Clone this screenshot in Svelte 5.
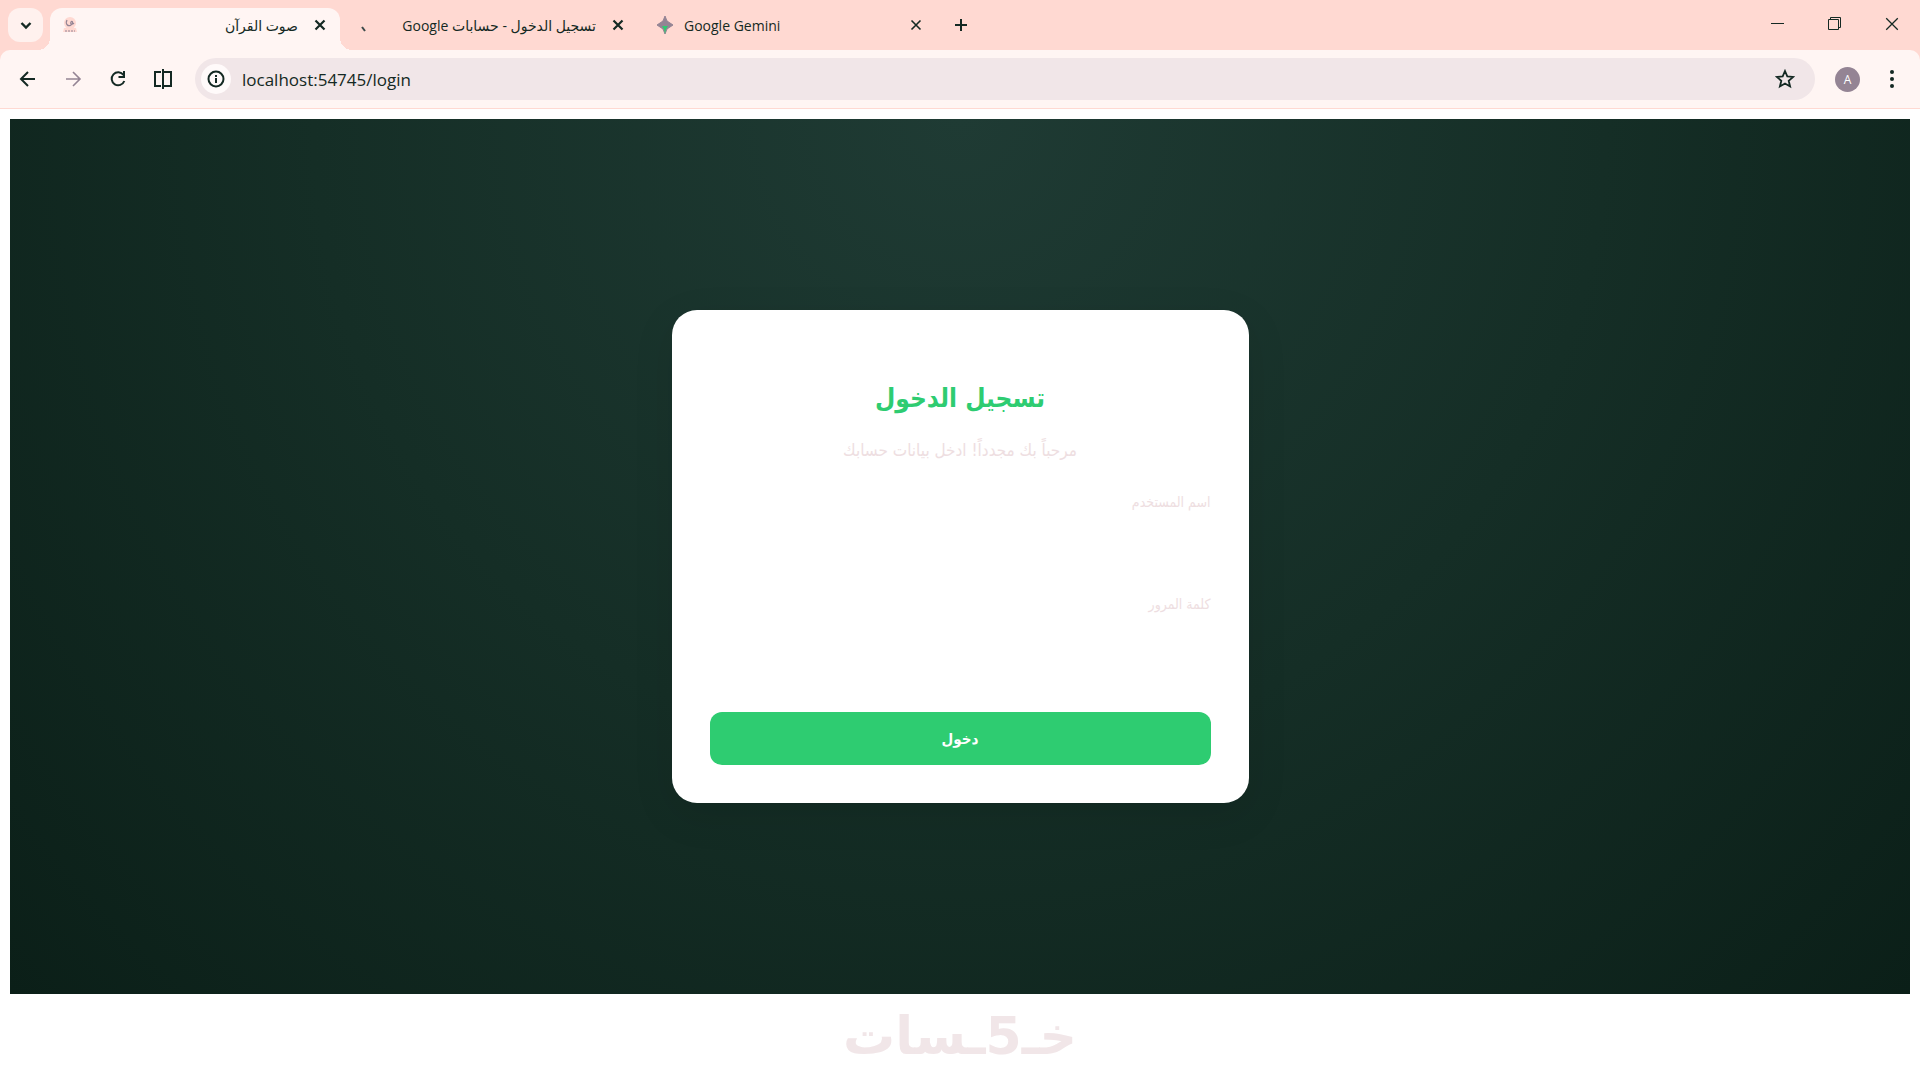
<script>
  let username = $state('');
  let password = $state('');
  let address = $state('localhost:54745/login');
</script>

{#snippet cross(size, weight)}
  <svg width={size} height={size} viewBox="0 0 14 14" fill="none" stroke="currentColor" stroke-width={weight}>
    <path d="M2.500 2.500l9 9M11.500 2.500l-9 9" />
  </svg>
{/snippet}

<div class="browser">
  <div class="chrome">
    <header class="tab-strip">
      <button type="button" class="tab-search" aria-label="Search tabs">
        <svg width="14" height="14" viewBox="0 0 14 14" fill="none" stroke="currentColor" stroke-width="2.4">
          <path d="M2.500 5L7 9.500 11.500 5" />
        </svg>
      </button>

      <div class="tab active">
        <svg class="favicon" width="16" height="16" viewBox="0 0 16 16" fill="none">
          <circle cx="8" cy="6" r="6" fill="#ffd9d2" />
          <path d="M5 3c-2 4 1 7 4 5s1-5 0-3 1 3 3 1" stroke="#948494" stroke-width="1.2" />
          <path d="M2 11h12l1 4H1z" fill="#ffd9d2" />
          <path d="M3 14h10" stroke="#948494" stroke-dasharray="2 1" />
        </svg>
        <button type="button" class="tab-title" dir="rtl">صوت القرآن</button>
        <button type="button" class="tab-close" aria-label="Close tab">{@render cross(14, 2.2)}</button>
      </div>

      <div class="tab">
        <svg class="favicon" width="16" height="16" viewBox="0 0 16 16" fill="none">
          <path d="M4 10l3 4" stroke="#3c4a4a" stroke-width="2" />
        </svg>
        <button type="button" class="tab-title" dir="rtl">تسجيل الدخول - حسابات Google</button>
        <button type="button" class="tab-close" aria-label="Close tab">{@render cross(14, 2.2)}</button>
      </div>

      <div class="tab">
        <svg class="favicon" width="18" height="18" viewBox="0 0 18 18">
          <path d="M9 0l2 5 6 4-6 4-2 5-2-5-6-4 6-4z" fill="#948494" stroke="#948494" />
          <path d="M6 10h6l-2 3-1 5-1-5z" fill="#2ecc71" />
        </svg>
        <button type="button" class="tab-title">Google Gemini</button>
        <button type="button" class="tab-close" aria-label="Close tab">{@render cross(14, 1.6)}</button>
      </div>

      <button type="button" class="new-tab" aria-label="New tab">
        <svg width="14" height="14" viewBox="0 0 14 14" stroke="currentColor" stroke-width="2">
          <path d="M7 1v12M1 7h12" />
        </svg>
      </button>

      <div class="window-controls">
        <button type="button" aria-label="Minimize">
          <svg width="14" height="14" viewBox="0 0 14 14" stroke="currentColor"><path d="M0 6.500h13" /></svg>
        </button>
        <button type="button" aria-label="Restore">
          <svg width="14" height="14" viewBox="0 0 14 14" fill="none" stroke="currentColor">
            <path d="M.5 2.500h10v10H.5zM2.500 2.500v-2h10v10h-2" />
          </svg>
        </button>
        <button type="button" aria-label="Close">{@render cross(18, 1)}</button>
      </div>
    </header>

    <nav class="toolbar">
      <button type="button" class="tool" aria-label="Back">
        <svg width="18" height="18" viewBox="0 0 18 18" fill="none" stroke="currentColor" stroke-width="2">
          <path d="M16 9H3M9 2L2 9l7 7" />
        </svg>
      </button>
      <button type="button" class="tool muted" aria-label="Forward">
        <svg width="18" height="18" viewBox="0 0 18 18" fill="none" stroke="currentColor" stroke-width="1.6">
          <path d="M2 9h13M9 2l7 7-7 7" />
        </svg>
      </button>
      <button type="button" class="tool" aria-label="Reload">
        <svg width="18" height="18" viewBox="0 0 18 18" fill="none" stroke="currentColor" stroke-width="2">
          <path d="M14.500 5A6.500 6.500 0 1 0 15.300 11M15 1v6H9.500" />
        </svg>
      </button>
      <button type="button" class="tool" aria-label="Split view">
        <svg width="20" height="20" viewBox="0 0 20 20" fill="none" stroke="currentColor" stroke-width="2">
          <path d="M8 3H2v14h6M10 0v20M10 3h8v14h-8" />
        </svg>
      </button>

      <div class="address">
        <button type="button" class="site-info" aria-label="View site information">
          <svg width="18" height="18" viewBox="0 0 18 18" fill="none" stroke="currentColor" stroke-width="2">
            <circle cx="9" cy="9" r="7.500" />
            <path d="M9 8v5M9 5v2" />
          </svg>
        </button>
        <input type="text" aria-label="Address" bind:value={address} spellcheck="false" />
        <button type="button" class="bookmark" aria-label="Bookmark this tab">
          <svg width="20" height="20" viewBox="0 0 20 20" fill="none" stroke="currentColor" stroke-width="1.800">
            <path d="M10 2l2.300 5.400 5.900.5-4.500 3.900 1.400 5.700L10 14.500l-5.100 3 1.400-5.700-4.500-3.900 5.900-.5z" />
          </svg>
        </button>
      </div>

      <button type="button" class="avatar" aria-label="Profile">A</button>
      <button type="button" class="more" aria-label="Menu">
        <svg width="4" height="18" viewBox="0 0 4 18" fill="currentColor">
          <circle cx="2" cy="2" r="2" /><circle cx="2" cy="9" r="2" /><circle cx="2" cy="16" r="2" />
        </svg>
      </button>
    </nav>
  </div>

  <main class="stage" dir="rtl">
    <form class="card" onsubmit={(e) => e.preventDefault()}>
      <h1>تسجيل الدخول</h1>
      <p>مرحباً بك مجدداً! ادخل بيانات حسابك</p>

      <div class="field">
        <label for="username">اسم المستخدم</label>
        <input id="username" type="text" bind:value={username} />
      </div>
      <div class="field">
        <label for="password">كلمة المرور</label>
        <input id="password" type="password" bind:value={password} />
      </div>

      <button type="submit" class="submit">دخول</button>
    </form>
  </main>

  <footer class="brand" dir="rtl">خـ5ـسات</footer>
</div>

<style>
  :global(body) {
    margin: 0;
    background: #fff;
  }

  .browser {
    display: flex;
    flex-direction: column;
    min-height: 100vh;
    color: #142923;
    font-family: 'Open Sans', 'DejaVu Sans', sans-serif;
  }

  button,
  input {
    padding: 0;
    border: 0;
    background: none;
    color: inherit;
    font: inherit;
  }

  button {
    display: flex;
    flex-shrink: 0;
    align-items: center;
    justify-content: center;
    cursor: pointer;
  }

  /* tabs */
  .chrome {
    background: #ffd9d2;
  }
  .tab-strip {
    display: flex;
    height: 50px;
  }
  .tab-search {
    width: 35px;
    height: 34px;
    margin: 8px 7px 0 8px;
    border-radius: 12px;
    background: #fff1ee;
  }
  .tab {
    display: flex;
    box-sizing: border-box;
    width: 290px;
    align-items: center;
    gap: 10px;
    padding: 0 12px;
    font-size: 14px;
  }
  .tab.active {
    position: relative;
    margin-top: 8px;
    padding-bottom: 8px;
    border-radius: 12px 12px 0 0;
    background: #fff5f3;
  }
  /* flared feet of the active tab */
  .tab.active::before,
  .tab.active::after {
    content: '';
    position: absolute;
    bottom: 0;
    width: 12px;
    height: 12px;
  }
  .tab.active::before {
    right: 100%;
    background: radial-gradient(circle at 0 0, transparent 12px, #fff5f3 12px);
  }
  .tab.active::after {
    left: 100%;
    background: radial-gradient(circle at 100% 0, transparent 12px, #fff5f3 12px);
  }
  .tab + .tab {
    width: 298px;
    padding-left: 18px;
  }
  .favicon {
    flex-shrink: 0;
  }
  .tab-title {
    flex: 1;
    justify-content: flex-start;
    margin-right: 4px;
    overflow: hidden;
    white-space: nowrap;
  }
  .tab-close {
    width: 16px;
    height: 16px;
  }
  .new-tab {
    width: 34px;
    margin-left: 8px;
  }
  .window-controls {
    display: flex;
    margin-left: auto;
  }
  .window-controls button {
    width: 57px;
    height: 48px;
  }

  /* toolbar */
  .toolbar {
    display: flex;
    height: 58px;
    align-items: center;
    border-bottom: 1px solid #ffd9d2;
    border-radius: 10px 10px 0 0;
    background: #fff5f3;
  }
  .tool {
    width: 45px;
    height: 42px;
  }
  .tool:first-child {
    margin-left: 5px;
  }
  .muted {
    color: #948494;
  }
  .address {
    display: flex;
    flex: 1;
    height: 42px;
    align-items: center;
    gap: 11px;
    margin-left: 10px;
    padding: 0 20px 0 6px;
    border-radius: 21px;
    background: #f1e6e8;
  }
  .address input {
    flex: 1;
    min-width: 0;
    font-size: 17px;
    outline: none;
  }
  .site-info {
    width: 30px;
    height: 30px;
    border-radius: 50%;
    background: #fffafa;
  }
  .avatar {
    width: 25px;
    height: 25px;
    margin-left: 20px;
    border-radius: 50%;
    background: #948494;
    color: #fff;
    font-size: 12px;
  }
  .more {
    width: 24px;
    height: 42px;
    margin: 0 16px 0 20px;
  }

  /* login page */
  .stage {
    display: flex;
    flex: 1;
    align-items: center;
    justify-content: center;
    margin: 10px 10px 0;
    background: radial-gradient(circle at top, #1f3b34, #152e26 50%, #0b1f18);
    font-family: 'DejaVu Sans Condensed', 'DejaVu Sans', sans-serif;
  }
  .card {
    box-sizing: border-box;
    width: 577px;
    padding: 64px 38px 38px;
    border-radius: 25px;
    background: #fff;
    box-shadow: 0 12px 40px rgba(0, 0, 0, 0.1);
  }
  h1 {
    margin: 0;
    color: #2ecc71;
    font-size: 26px;
    line-height: 48px;
    text-align: center;
  }
  p {
    margin: 16px 0 28px;
    color: #eedee1;
    font-size: 17px;
    line-height: 24px;
    text-align: center;
  }
  .field {
    margin-bottom: 20px;
  }
  label {
    display: block;
    color: #eedee1;
    font-size: 14px;
    line-height: 24px;
  }
  .field input {
    box-sizing: border-box;
    width: 100%;
    height: 48px;
    margin-top: 10px;
    padding: 0 14px;
    border-radius: 12px;
    color: #142923;
  }
  .submit {
    width: 100%;
    height: 53px;
    margin-top: 38px;
    border-radius: 12px;
    background: #2ecc71;
    color: #fff;
    font-size: 15px;
    font-weight: bold;
  }
  .brand {
    height: 84px;
    color: #f1e6e8;
    font-family: 'DejaVu Sans', sans-serif;
    font-size: 52px;
    font-weight: bold;
    line-height: 84px;
    text-align: center;
  }
</style>
